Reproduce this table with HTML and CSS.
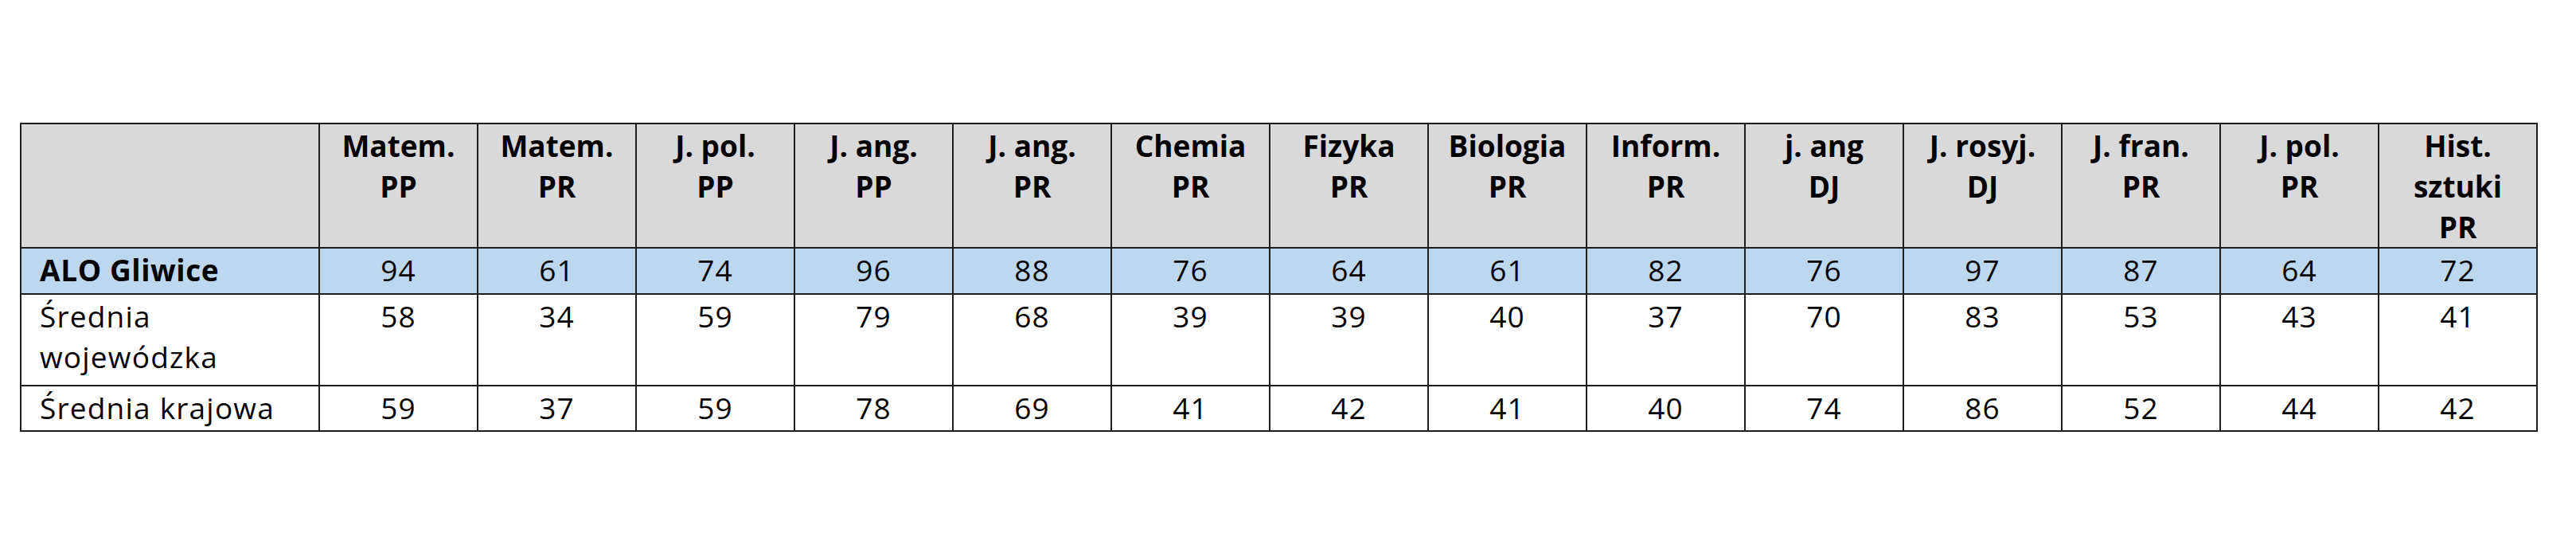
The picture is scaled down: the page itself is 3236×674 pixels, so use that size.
FILE: index.html
```html
<!DOCTYPE html>
<html lang="pl">
<head>
<meta charset="utf-8">
<title>Wyniki matur</title>
<link rel="stylesheet" href="styles.css">
</head>
<body>
<div class="page">
  <table class="results">
    <colgroup>
      <col class="col-name">
      <col class="col-val"><col class="col-val"><col class="col-val"><col class="col-val">
      <col class="col-val"><col class="col-val"><col class="col-val"><col class="col-val">
      <col class="col-val"><col class="col-val"><col class="col-val"><col class="col-val">
      <col class="col-val"><col class="col-val">
    </colgroup>
    <thead>
      <tr class="head-row">
        <th></th>
        <th>Matem.<br>PP</th>
        <th>Matem.<br>PR</th>
        <th>J. pol.<br>PP</th>
        <th>J. ang.<br>PP</th>
        <th>J. ang.<br>PR</th>
        <th>Chemia<br>PR</th>
        <th>Fizyka<br>PR</th>
        <th>Biologia<br>PR</th>
        <th>Inform.<br>PR</th>
        <th>j. ang<br>DJ</th>
        <th>J. rosyj.<br>DJ</th>
        <th>J. fran.<br>PR</th>
        <th>J. pol.<br>PR</th>
        <th>Hist.<br>sztuki<br>PR</th>
      </tr>
    </thead>
    <tbody>
      <tr class="row-school">
        <td class="name">ALO Gliwice</td>
        <td>94</td><td>61</td><td>74</td><td>96</td><td>88</td><td>76</td><td>64</td>
        <td>61</td><td>82</td><td>76</td><td>97</td><td>87</td><td>64</td><td>72</td>
      </tr>
      <tr class="row-region">
        <td class="name">Średnia wojewódzka</td>
        <td>58</td><td>34</td><td>59</td><td>79</td><td>68</td><td>39</td><td>39</td>
        <td>40</td><td>37</td><td>70</td><td>83</td><td>53</td><td>43</td><td>41</td>
      </tr>
      <tr class="row-country">
        <td class="name">Średnia krajowa</td>
        <td>59</td><td>37</td><td>59</td><td>78</td><td>69</td><td>41</td><td>42</td>
        <td>41</td><td>40</td><td>74</td><td>86</td><td>52</td><td>44</td><td>42</td>
      </tr>
    </tbody>
  </table>
</div>
</body>
</html>
```

FILE: styles.css
```css
html, body {
  margin: 0;
  padding: 0;
  background: #ffffff;
}

.page {
  padding: 154px 0 0 25px;
}

.results {
  border-collapse: collapse;
  table-layout: fixed;
  width: 3161px;
  font-family: "Open Sans", "Noto Sans", sans-serif;
  font-size: 37px;
  font-weight: 500;
  line-height: 51px;
  letter-spacing: 1.2px;
  color: #000;
}

.col-name { width: 375px; }
.col-val { width: 199px; }

.results th,
.results td {
  border: 2px solid #1e1e1e;
  padding: 1px 0 0;
  vertical-align: top;
  text-align: center;
  overflow: hidden;
}

.results th {
  font-weight: 700;
  letter-spacing: 0;
}

.head-row th {
  background: #d9d9d9;
  height: 152px;
}

.row-school td {
  background: #bdd7ee;
  height: 55px;
}

.row-school .name {
  font-weight: 700;
  letter-spacing: 0.6px;
}

.row-region td {
  height: 112px;
}

.row-country td {
  height: 54px;
}

.results .name {
  text-align: left;
  padding-left: 23px;
}
```
